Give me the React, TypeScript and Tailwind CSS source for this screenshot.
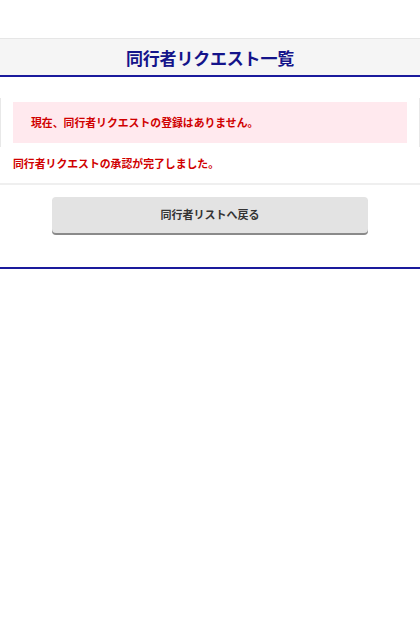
import React from "react";

export default function App() {
  const font = { fontFamily: '"Noto Sans CJK JP", "Noto Sans", sans-serif' };
  return (
    <div className="w-[420px] min-h-[627px] bg-white" style={font}>
      <div className="h-[38px]" />
      <div className="h-[39px] border-t border-[#e6e6e6] bg-[#f5f5f5] border-b-2 border-b-[#1a1a9c] flex items-center justify-center">
        <h1 className="text-[17px] font-bold text-[#14148a] leading-none tracking-[-0.2px]">同行者リクエスト一覧</h1>
      </div>
      <div className="h-[21px]" />
      <div className="border-x border-[#e8e8e8] px-[12px] py-[4px]">
        <div className="h-[41px] bg-[#ffe9ee] flex items-center pl-[18px]">
          <p className="text-[10.85px] font-bold text-[#d00000] leading-none">現在、同行者リクエストの登録はありません。</p>
        </div>
      </div>
      <p className="mt-[11px] pl-[13px] text-[10.85px] font-bold text-[#d00000] leading-none">同行者リクエストの承認が完了しました。</p>
      <div className="mt-[14px] border-t-2 border-[#efefef]" />
      <div className="pt-[12px] flex justify-center">
        <button className="w-[316px] h-[36px] rounded-[4px] bg-[#e3e3e3] shadow-[0_2px_0_#8a8a8a] flex items-center justify-center">
          <span className="text-[11px] font-bold text-[#333333] leading-none">同行者リストへ戻る</span>
        </button>
      </div>
      <div className="h-[34px]" />
      <div className="border-t-2 border-[#1a1a9c]" />
    </div>
  );
}
